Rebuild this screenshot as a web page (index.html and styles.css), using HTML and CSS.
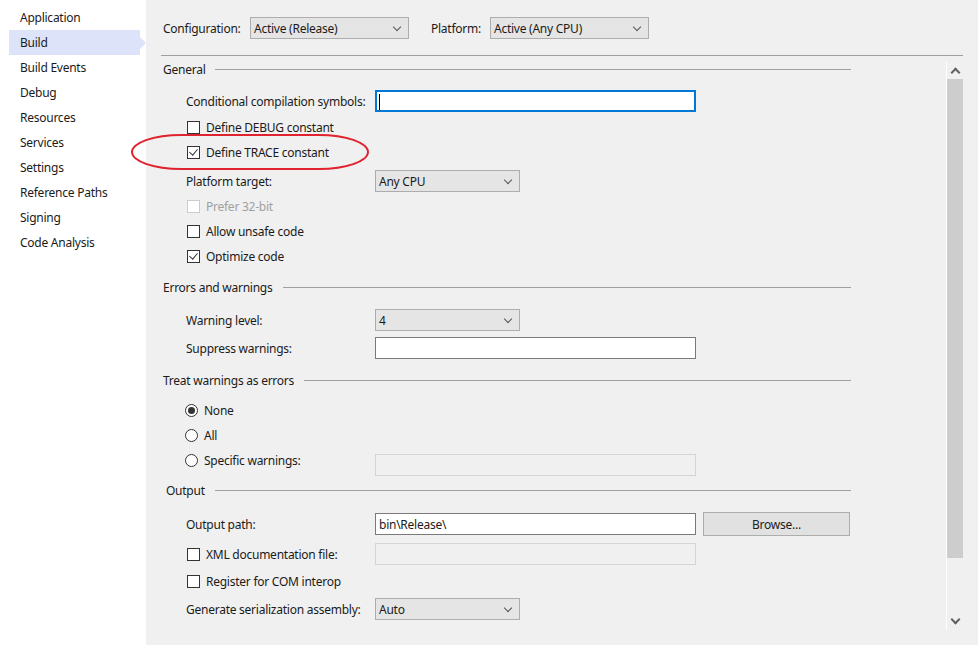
FILE: index.html
```html
<!DOCTYPE html>
<html>
<head>
<meta charset="utf-8">
<link rel="stylesheet" href="styles.css">
</head>
<body>
<div class="app">
  <nav class="sidebar">
    <div class="nav-item">Application</div>
    <div class="nav-item active">Build</div>
    <div class="nav-item">Build Events</div>
    <div class="nav-item">Debug</div>
    <div class="nav-item">Resources</div>
    <div class="nav-item">Services</div>
    <div class="nav-item">Settings</div>
    <div class="nav-item">Reference Paths</div>
    <div class="nav-item">Signing</div>
    <div class="nav-item">Code Analysis</div>
  </nav>
  <main class="main">
    <div class="topbar">
      <span class="top-label">Configuration:</span>
      <div class="select sel-config">Active (Release)<span class="chev"></span></div>
      <span class="top-label plat">Platform:</span>
      <div class="select sel-config">Active (Any CPU)<span class="chev"></span></div>
    </div>
    <div class="top-rule"></div>
    <div class="scroll-area">
      <div class="form">
        <div class="section-head sp2"><span>General</span><span class="rule"></span></div>
        <div class="row sp10"><span class="label">Conditional compilation symbols:</span><div class="input focus"><span class="caret"></span></div></div>
        <div class="row sp4"><span class="check"></span><span class="clabel">Define DEBUG constant</span></div>
        <div class="row sp3 traced"><span class="check checked"></span><span class="clabel">Define TRACE constant</span><span class="ellipse"></span></div>
        <div class="row sp7"><span class="label">Platform target:</span><div class="select sel-small">Any CPU<span class="chev"></span></div></div>
        <div class="row sp3 disabled"><span class="check"></span><span class="clabel">Prefer 32-bit</span></div>
        <div class="row sp3"><span class="check"></span><span class="clabel">Allow unsafe code</span></div>
        <div class="row sp3"><span class="check checked"></span><span class="clabel">Optimize code</span></div>

        <div class="section-head sp9"><span>Errors and warnings</span><span class="rule"></span></div>
        <div class="row sp11"><span class="label">Warning level:</span><div class="select sel-small">4<span class="chev"></span></div></div>
        <div class="row sp6"><span class="label">Suppress warnings:</span><div class="input"></div></div>

        <div class="section-head sp10"><span>Treat warnings as errors</span><span class="rule"></span></div>
        <div class="row sp8"><span class="radio on"></span><span class="rlbl">None</span></div>
        <div class="row sp3"><span class="radio"></span><span class="rlbl">All</span></div>
        <div class="row sp3"><span class="radio"></span><span class="rlbl rlabel-r">Specific warnings:</span><div class="input off low"></div></div>

        <div class="section-head sp8 out"><span>Output</span><span class="rule"></span></div>
        <div class="row sp12"><span class="label">Output path:</span><div class="input">bin\Release\</div><div class="button">Browse...</div></div>
        <div class="row sp8"><span class="check"></span><span class="clabel rlabel">XML documentation file:</span><div class="input off"></div></div>
        <div class="row sp5"><span class="check"></span><span class="clabel">Register for COM interop</span></div>
        <div class="row sp6"><span class="label">Generate serialization assembly:</span><div class="select sel-small">Auto<span class="chev"></span></div></div>
      </div>
      <div class="scrollbar">
        <div class="sb-arrow up"></div>
        <div class="sb-thumb"></div>
        <div class="sb-track"></div>
        <div class="sb-arrow down"></div>
      </div>
    </div>
  </main>
</div>
</body>
</html>
```

FILE: styles.css
```css
* { box-sizing: border-box; }
html, body { margin: 0; padding: 0; }
body {
  font-family: "Segoe UI", "Noto Sans", "Open Sans", sans-serif;
  font-size: 12px;
  letter-spacing: -0.25px;
  color: #1b1b1b;
  background: #f0f0f0;
  width: 978px;
  height: 645px;
  overflow: hidden;
}
.app { display: flex; height: 645px; }

.sidebar {
  width: 146px;
  flex: none;
  background: #ffffff;
  padding-top: 5px;
}
.nav-item {
  height: 25px;
  line-height: 26px;
  margin-left: 9px;
  margin-right: 6px;
  padding-left: 11px;
  position: relative;
}
.nav-item.active {
  background: #dde3f8;
}
.nav-item.active::after {
  content: "";
  position: absolute;
  right: -6px;
  top: 7px;
  border-left: 6px solid #dde3f8;
  border-top: 6px solid transparent;
  border-bottom: 6px solid transparent;
}

.main { flex: 1; padding-left: 15px; display: flex; flex-direction: column; }
.topbar {
  display: flex;
  align-items: center;
  height: 22px;
  margin-top: 17px;
  padding-left: 2px;
}
.top-label { width: 87px; flex: none; padding-top: 1px; }
.top-label.plat { margin-left: 22px; width: 59px; }
.sel-config { width: 159px; }

.select {
  height: 22px;
  border: 1px solid #adadad;
  background: #e5e5e5;
  padding-left: 3px;
  padding-top: 1px;
  display: flex;
  align-items: center;
  position: relative;
  flex: none;
}
.chev {
  position: absolute;
  right: 8px;
  top: 6px;
  width: 6px;
  height: 6px;
  border-right: 1px solid #555;
  border-bottom: 1px solid #555;
  transform: rotate(45deg);
}
.sel-small { width: 145px; }

.top-rule {
  height: 1px;
  background: #a0a0a0;
  margin-top: 16px;
  width: 802px;
}

.scroll-area { display: flex; flex: 1; }
.form { width: 690px; padding-left: 2px; position: relative; }

.section-head {
  height: 22px;
  display: flex;
  align-items: center;
  padding-top: 1px;
}
.section-head.out { padding-left: 3px; }
.section-head .rule {
  flex: 1;
  height: 1px;
  background: #a0a0a0;
  margin-left: 10px;
}

.row {
  height: 22px;
  display: flex;
  align-items: center;
  padding-left: 23px;
  position: relative;
}
.label { width: 189px; flex: none; padding-top: 1px; }
.clabel { margin-left: 6px; padding-top: 1px; }
.rlabel { width: 169px; flex: none; }
.rlbl { margin-left: 6px; padding-top: 1px; }
.rlabel-r { width: 171px; flex: none; }

.sp2 { margin-top: 2px; }
.sp3 { margin-top: 3px; }
.sp4 { margin-top: 4px; }
.sp5 { margin-top: 5px; }
.sp6 { margin-top: 6px; }
.sp7 { margin-top: 7px; }
.sp8 { margin-top: 8px; }
.sp9 { margin-top: 9px; }
.sp10 { margin-top: 10px; }
.sp11 { margin-top: 11px; }
.sp12 { margin-top: 12px; }

.input {
  width: 321px;
  height: 22px;
  background: #ffffff;
  border: 1px solid #7a7a7a;
  padding-left: 3px;
  padding-top: 1px;
  display: flex;
  align-items: center;
  flex: none;
}
.input.focus { border: 1px solid #0078d7; box-shadow: inset 0 0 0 1px #0078d7; }
.caret { width: 1px; height: 16px; background: #000; }
.input.off { background: #f0f0f0; border-color: #d4d4d4; }
.input.low { position: relative; top: 5px; }

.button {
  margin-left: 7px;
  width: 147px;
  height: 24px;
  background: #e1e1e1;
  border: 1px solid #adadad;
  display: flex;
  align-items: center;
  justify-content: center;
  flex: none;
}

.check {
  width: 13px;
  height: 13px;
  border: 1px solid #333;
  background: #fff;
  flex: none;
  margin-left: 1px;
  position: relative;
}
.check.checked::after {
  content: "";
  position: absolute;
  left: 3px;
  top: 0px;
  width: 4px;
  height: 7px;
  border-right: 1.5px solid #333;
  border-bottom: 1.5px solid #333;
  transform: rotate(40deg);
}
.disabled { color: #a0a0a0; }
.disabled .check { border-color: #cccccc; }

.radio {
  width: 13px;
  height: 13px;
  border: 1px solid #333;
  border-radius: 50%;
  background: #fff;
  flex: none;
  position: relative;
  margin-left: -1px;
}
.radio.on::after {
  content: "";
  position: absolute;
  left: 2px;
  top: 2px;
  width: 7px;
  height: 7px;
  border-radius: 50%;
  background: #333;
}

.ellipse {
  position: absolute;
  left: -32px;
  top: -7px;
  width: 238px;
  height: 36px;
  border: 2px solid #e0232e;
  border-radius: 50px / 18px;
  pointer-events: none;
}

.scrollbar {
  margin-left: 95px;
  margin-top: 6px;
  width: 17px;
  height: 568px;
  border-left: 1px solid #ffffff;
  display: flex;
  flex-direction: column;
}
.sb-arrow { height: 17px; position: relative; }
.sb-arrow::after {
  content: "";
  position: absolute;
  left: 5px;
  width: 5px;
  height: 5px;
  border-left: 2px solid #606060;
  border-top: 2px solid #606060;
}
.sb-arrow.up::after { top: 7px; transform: rotate(45deg); }
.sb-arrow.down::after { top: 3px; transform: rotate(225deg); }
.sb-thumb { height: 479px; background: #cdcdcd; }
.sb-track { flex: 1; }
```
